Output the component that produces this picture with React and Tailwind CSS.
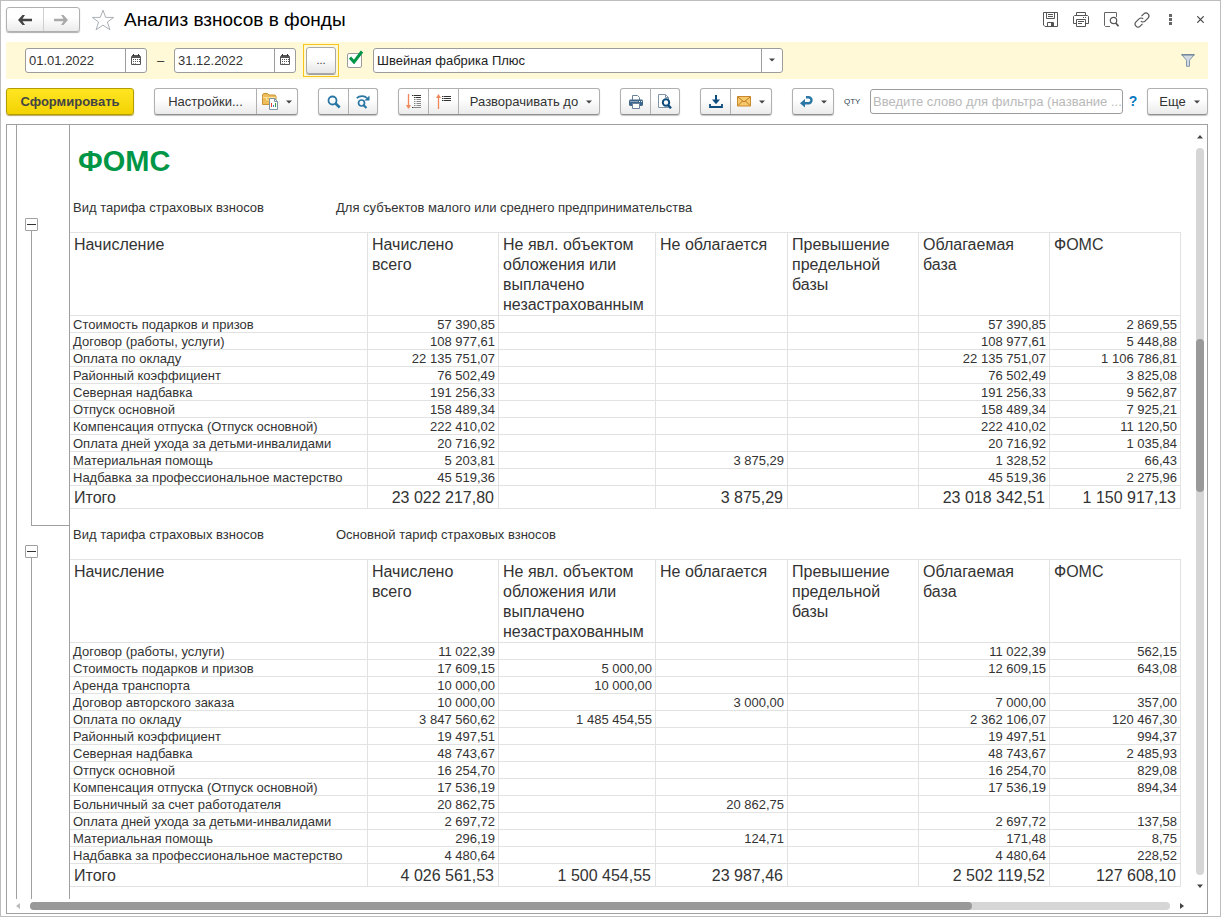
import { useState } from 'react'

const columns = [
  'Начисление',
  'Начислено всего',
  'Не явл. объектом обложения или выплачено незастрахованным',
  'Не облагается',
  'Превышение предельной базы',
  'Облагаемая база',
  'ФОМС',
]

const sections = [
  {
    tariff: 'Для субъектов малого или среднего предпринимательства',
    rows: [
      ['Стоимость подарков и призов', '57 390,85', '', '', '', '57 390,85', '2 869,55'],
      ['Договор (работы, услуги)', '108 977,61', '', '', '', '108 977,61', '5 448,88'],
      ['Оплата по окладу', '22 135 751,07', '', '', '', '22 135 751,07', '1 106 786,81'],
      ['Районный коэффициент', '76 502,49', '', '', '', '76 502,49', '3 825,08'],
      ['Северная надбавка', '191 256,33', '', '', '', '191 256,33', '9 562,87'],
      ['Отпуск основной', '158 489,34', '', '', '', '158 489,34', '7 925,21'],
      ['Компенсация отпуска (Отпуск основной)', '222 410,02', '', '', '', '222 410,02', '11 120,50'],
      ['Оплата дней ухода за детьми-инвалидами', '20 716,92', '', '', '', '20 716,92', '1 035,84'],
      ['Материальная помощь', '5 203,81', '', '3 875,29', '', '1 328,52', '66,43'],
      ['Надбавка за профессиональное мастерство', '45 519,36', '', '', '', '45 519,36', '2 275,96'],
    ],
    total: ['Итого', '23 022 217,80', '', '3 875,29', '', '23 018 342,51', '1 150 917,13'],
  },
  {
    tariff: 'Основной тариф страховых взносов',
    rows: [
      ['Договор (работы, услуги)', '11 022,39', '', '', '', '11 022,39', '562,15'],
      ['Стоимость подарков и призов', '17 609,15', '5 000,00', '', '', '12 609,15', '643,08'],
      ['Аренда транспорта', '10 000,00', '10 000,00', '', '', '', ''],
      ['Договор авторского заказа', '10 000,00', '', '3 000,00', '', '7 000,00', '357,00'],
      ['Оплата по окладу', '3 847 560,62', '1 485 454,55', '', '', '2 362 106,07', '120 467,30'],
      ['Районный коэффициент', '19 497,51', '', '', '', '19 497,51', '994,37'],
      ['Северная надбавка', '48 743,67', '', '', '', '48 743,67', '2 485,93'],
      ['Отпуск основной', '16 254,70', '', '', '', '16 254,70', '829,08'],
      ['Компенсация отпуска (Отпуск основной)', '17 536,19', '', '', '', '17 536,19', '894,34'],
      ['Больничный за счет работодателя', '20 862,75', '', '20 862,75', '', '', ''],
      ['Оплата дней ухода за детьми-инвалидами', '2 697,72', '', '', '', '2 697,72', '137,58'],
      ['Материальная помощь', '296,19', '', '124,71', '', '171,48', '8,75'],
      ['Надбавка за профессиональное мастерство', '4 480,64', '', '', '', '4 480,64', '228,52'],
    ],
    total: ['Итого', '4 026 561,53', '1 500 454,55', '23 987,46', '', '2 502 119,52', '127 608,10'],
  },
]

function Icon({ w = 16, h = 16, children }) {
  return (
    <svg width={w} height={h} viewBox={`0 0 ${w} ${h}`} fill="none" className="shrink-0" aria-hidden="true">
      {children}
    </svg>
  )
}

function Caret() {
  return (
    <Icon w={6} h={4}>
      <path d="M0 .5h6L3 3.500z" fill="#444" />
    </Icon>
  )
}

function ArrowIcon({ color, flip }) {
  return (
    <Icon w={14} h={12}>
      <path
        d={flip ? 'M0 4.800h9.500L7 1h2.500L14 6 9.500 11H7l2.500-3.800H0z' : 'M14 4.800H4.500L7 1H4.500L0 6l4.500 5H7L4.500 7.200H14z'}
        fill={color}
      />
    </Icon>
  )
}

function StarIcon() {
  return (
    <Icon w={24} h={22}>
      <path
        d="M12 1.200l2.700 7.200h8L16.400 13l2.500 7.800L12 16.100l-6.900 4.700L7.600 13 1.300 8.400h8z"
        stroke="#a9b0b6"
        fill="#fff"
      />
    </Icon>
  )
}

function CalendarIcon() {
  return (
    <Icon w={10} h={11}>
      <path d="M.5 2.500h9v8h-9z" fill="#fff" stroke="#555" />
      <path d="M1 1h8v3H1z" fill="#555" />
      <path d="M2 0h1v2H2zM7 0h1v2H7z" fill="#333" />
      <path d="M2 5.500h7M2 7.500h7" stroke="#555" strokeDasharray="1 1" />
      <path d="M2 9.500h3" stroke="#999" strokeDasharray="1 1" />
    </Icon>
  )
}

function SearchIcon() {
  return (
    <Icon w={14} h={14}>
      <circle cx="5.500" cy="5.500" r="4" stroke="#2a76a5" strokeWidth="1.800" />
      <path d="M8.300 8.300l4.400 4.200" stroke="#2a76a5" strokeWidth="2.600" />
    </Icon>
  )
}

function SearchNextIcon() {
  return (
    <Icon w={14} h={14}>
      <path d="M.8 3.200C3.500.6 8.500.4 11 3" stroke="#2a76a5" strokeWidth="1.800" />
      <path d="M13.500.5v5H8.300z" fill="#2a76a5" />
      <circle cx="5.500" cy="8" r="3" stroke="#2a76a5" strokeWidth="1.700" />
      <path d="M7.500 10l3 3" stroke="#2a76a5" strokeWidth="2.200" />
    </Icon>
  )
}

function VariantsIcon() {
  return (
    <Icon w={16} h={17}>
      <path d="M.5 3.500V2l1-1.500h4L7 2h6l1 1.500v8H.5z" fill="#edbd59" stroke="#c8943a" />
      <path d="M1 4.500h12.500M4.500 4v3h3" stroke="#fbe3a2" />
      <path d="M7.500 5.500h5l3 3v8h-8z" fill="#fff" stroke="#7c93a8" />
      <path d="M12.500 5.500v3h3" stroke="#7c93a8" />
      <path d="M9.500 10v4" stroke="#e0443a" />
      <path d="M11.500 12v2" stroke="#3d79c9" />
      <path d="M13.500 10v4" stroke="#35a047" />
    </Icon>
  )
}

function ExpandIcon() {
  return (
    <Icon w={16} h={16}>
      <path d="M2.500 0v14" stroke="#f0875a" strokeWidth="1.300" />
      <path d="M0 11h5l-2.500 4z" fill="#f0875a" />
      <path d="M6 1.500h1.500M8 1.500h7M8 3.500h1.500M10 3.500h5M6 13.500h1.500" stroke="#333" />
      <path d="M8 5.500h1.500M10.500 5.500H15M8 7.500h1.500M10.500 7.500H15M8 9.500h1.500M10.500 9.500H15M8 11.500h1.500M10.500 11.500H15M8 13.500h7" stroke="#888" />
    </Icon>
  )
}

function CollapseIcon() {
  return (
    <Icon w={16} h={16}>
      <path d="M2.500 2v13" stroke="#f0875a" strokeWidth="1.300" />
      <path d="M0 4h5L2.500 0z" fill="#f0875a" />
      <path d="M6 2.500h1.500M8 2.500h7M6 4.500h1.500M8 4.500h7M6 6.500h1.500M8 6.500h7" stroke="#333" />
    </Icon>
  )
}

function PrintIcon() {
  return (
    <Icon w={14} h={14}>
      <path d="M3.500 5V.5h5l2 2V5" fill="#fff" stroke="#6a8299" />
      <path d="M1 4.500h12l1 1V10l-1 1H1l-1-1V5.500z" fill="#3f668b" />
      <path d="M1 6.500h8" stroke="#8ba3ba" />
      <path d="M10 6.500h1M12 6.500h1" stroke="#fff" />
      <path d="M3.500 8.500h7v5h-7z" fill="#fff" stroke="#6a8299" />
    </Icon>
  )
}

function PreviewIcon() {
  return (
    <Icon w={14} h={15}>
      <path d="M.5.5h7l3 3v10H.5z" fill="#fff" stroke="#8195a8" />
      <path d="M7.500.5v3h3" stroke="#8195a8" />
      <circle cx="8" cy="8.500" r="3.200" fill="#fff" stroke="#0d4d7d" strokeWidth="2" />
      <path d="M10 11l3 3.300" stroke="#0d4d7d" strokeWidth="2.400" />
    </Icon>
  )
}

function DownloadIcon() {
  return (
    <Icon w={14} h={13}>
      <path d="M7 0v6" stroke="#0d4d7d" strokeWidth="2" />
      <path d="M3 4.500h8L7 9.200z" fill="#0d4d7d" />
      <path d="M1 9v3h12V9" stroke="#0d4d7d" strokeWidth="1.800" />
    </Icon>
  )
}

function MailIcon() {
  return (
    <Icon w={14} h={11}>
      <path d="M.5.5h13v9.500H.5z" fill="#f8c96b" stroke="#c8872b" />
      <path d="M1 1l6 5 6-5M1 9.500L5.500 5M13 9.500L8.500 5" stroke="#b9781f" />
    </Icon>
  )
}

function ReturnIcon() {
  return (
    <Icon w={13} h={12}>
      <path d="M6 1.300h2.500a2.900 2.900 0 010 6H4" stroke="#2a76a5" strokeWidth="2.400" />
      <path d="M0 7.300L5 3v8.600z" fill="#2a76a5" />
    </Icon>
  )
}

function FunnelIcon() {
  return (
    <Icon w={14} h={13}>
      <path d="M.7.500h12.600L8.500 6.300v6h-3v-6z" fill="#d3dae1" stroke="#8497a8" />
      <path d="M.5 1h13" stroke="#667c90" />
    </Icon>
  )
}

function SaveIcon() {
  return (
    <Icon w={15} h={15}>
      <path d="M.5.5h14v14H2l-1.500-1.500z" stroke="#555" />
      <path d="M3.500.5v6h8v-6M5 2.500h5M5 4.500h5M4.500 14v-3.500h6V14" stroke="#555" />
      <path d="M8 11h2v3H8z" fill="#555" />
    </Icon>
  )
}

function PrinterIcon() {
  return (
    <Icon w={16} h={15}>
      <path d="M3.500 3.500v-3h9v3M3.500 11.500h-3V4.500l1-1h13l1 1v7h-3" stroke="#555" />
      <path d="M3.500 7.500h9v7h-9zM5 9.500h6M5 11.500h4M10 5.500h1M12 5.500h1" stroke="#555" />
    </Icon>
  )
}

function FindIcon() {
  return (
    <Icon w={15} h={15}>
      <path d="M6 14.500H1.500l-1-1V.5h12V5" stroke="#666" />
      <circle cx="9.500" cy="8.500" r="3.200" stroke="#555" strokeWidth="1.200" />
      <path d="M11.800 11l2.700 3.300" stroke="#555" strokeWidth="1.800" />
    </Icon>
  )
}

function LinkIcon() {
  return (
    <Icon w={16} h={16}>
      <path
        d="M7.500 4.200L9.800 1.900a2.900 2.900 0 014.200 4.200l-3 3a2.900 2.900 0 01-4.200 0M8.500 11.800l-2.300 2.300A2.900 2.900 0 012 9.900l3-3a2.900 2.900 0 014.200 0"
        stroke="#555"
        strokeWidth="1.200"
      />
    </Icon>
  )
}

function DotsIcon() {
  return (
    <Icon w={3} h={11}>
      <path d="M0 0h3v3H0zM0 4h3v3H0zM0 8h3v3H0z" fill="#666" />
    </Icon>
  )
}

function CloseIcon() {
  return (
    <Icon w={7} h={7}>
      <path d="M.3.3l6.400 6.400M6.700.3L.3 6.700" stroke="#444" strokeWidth="1.200" />
    </Icon>
  )
}

function ButtonGroup({ children }) {
  return (
    <div className="flex h-[27px] shrink-0 divide-x divide-[#b0b0b0] rounded-[3px] border border-[#b0b0b0] border-b-[#8f8f8f] bg-linear-to-b from-white from-40% to-[#ebebeb] shadow-[0_1px_1px_#c4c4c4]">
      {children}
    </div>
  )
}

function IconButton({ label, caret, children }) {
  return (
    <button
      type="button"
      aria-label={label}
      className={caret ? 'flex w-10 items-center justify-center gap-2' : 'flex w-[30px] items-center justify-center last:w-7'}
    >
      {children}
      {caret && <Caret />}
    </button>
  )
}

function DateField({ label, value }) {
  const [date, setDate] = useState(value)

  return (
    <div className="flex h-[25px] w-[122px] rounded-[3px] border border-[#9c9c9c] bg-white">
      <input
        type="text"
        aria-label={label}
        value={date}
        onChange={(e) => setDate(e.target.value)}
        className="w-0 flex-1 px-[3px] text-[13px] outline-none"
      />
      <button
        type="button"
        aria-label="Выбрать дату"
        className="flex w-[21px] items-center justify-center border-l border-[#9c9c9c] pb-[2px]"
      >
        <CalendarIcon />
      </button>
    </div>
  )
}

function TitleBar() {
  return (
    <header className="flex h-[41px] items-center pr-4 pb-1 pl-[5px]">
      <div className="flex h-[25px] w-[74px] divide-x divide-[#cfcfcf] rounded-[3px] border border-[#b0b0b0] bg-linear-to-b from-white from-40% to-[#ebebeb] shadow-[0_1px_1px_#b0b0b0]">
        <button type="button" aria-label="Назад" className="flex flex-1 items-center justify-center">
          <ArrowIcon color="#444" />
        </button>
        <button type="button" aria-label="Вперед" className="flex flex-1 items-center justify-center">
          <ArrowIcon color="#aaa" flip />
        </button>
      </div>
      <button type="button" aria-label="В избранное" className="ml-[11px]">
        <StarIcon />
      </button>
      <h1 className="ml-[9px] flex-1 pt-[2px] text-[19px] text-black">Анализ взносов в фонды</h1>
      <div className="flex items-center gap-[15px]">
        <button type="button" aria-label="Сохранить"><SaveIcon /></button>
        <button type="button" aria-label="Печать"><PrinterIcon /></button>
        <button type="button" aria-label="Просмотр"><FindIcon /></button>
        <button type="button" aria-label="Ссылка"><LinkIcon /></button>
        <button type="button" aria-label="Меню" className="ml-1"><DotsIcon /></button>
        <button type="button" aria-label="Закрыть" className="ml-[10px]"><CloseIcon /></button>
      </div>
    </header>
  )
}

function FilterBar() {
  const [enabled, setEnabled] = useState(true)

  return (
    <div className="mr-3 ml-[5px] flex h-[37px] items-center bg-[#fff9d8] pr-[13px] pl-[19px]">
      <DateField label="Начало периода" value="01.01.2022" />
      <span className="w-[27px] text-center">–</span>
      <DateField label="Конец периода" value="31.12.2022" />
      <div className="ml-[7px] border border-[#f5c51c] p-[2px]">
        <button
          type="button"
          aria-label="Выбрать период"
          className="block h-[27px] w-[30px] rounded-[3px] border border-[#a8a8a8] bg-linear-to-b from-white from-40% to-[#e6e6e6] text-[11px] shadow-[0_1px_0_#a0a0a0]"
        >
          ...
        </button>
      </div>
      <span className="relative ml-2 h-[15px] w-[15px]">
        <input
          type="checkbox"
          aria-label="Отбор по организации"
          checked={enabled}
          onChange={(e) => setEnabled(e.target.checked)}
          className="block h-[15px] w-[15px] appearance-none rounded-[2px] border border-[#9c9c9c] bg-white"
        />
        {enabled && (
          <span className="pointer-events-none absolute -top-[3px] left-[2px]">
            <Icon w={15} h={14}>
              <path d="M1 7.500l4 4.500L13 1.500" stroke="#009646" strokeWidth="3" />
            </Icon>
          </span>
        )}
      </span>
      <div className="relative ml-[11px] h-[25px] w-[410px]">
        <select
          aria-label="Организация"
          className="block h-full w-full appearance-none rounded-[3px] border border-[#9c9c9c] bg-white px-[3px] text-[13px] text-[#222]"
        >
          <option>Швейная фабрика Плюс</option>
        </select>
        <span className="pointer-events-none absolute inset-y-px right-px flex w-[21px] items-center justify-center border-l border-[#9c9c9c] pb-[2px]">
          <Caret />
        </span>
      </div>
      <button type="button" aria-label="Фильтр" className="ml-auto">
        <FunnelIcon />
      </button>
    </div>
  )
}

function Toolbar() {
  return (
    <div className="mr-3 ml-[5px] flex h-[45px] items-center gap-5">
      <button
        type="button"
        className="h-[27px] w-32 shrink-0 rounded-[3px] border border-[#b39c00] bg-linear-to-b from-[#ffe620] to-[#f3d200] text-[13px] font-bold text-[#444] shadow-[0_1px_1px_#b8a860]"
      >
        Сформировать
      </button>
      <ButtonGroup>
        <button type="button" className="w-[102px] text-[13px]">Настройки...</button>
        <IconButton label="Варианты отчета" caret><VariantsIcon /></IconButton>
      </ButtonGroup>
      <ButtonGroup>
        <IconButton label="Найти"><SearchIcon /></IconButton>
        <IconButton label="Найти далее"><SearchNextIcon /></IconButton>
      </ButtonGroup>
      <ButtonGroup>
        <IconButton label="Развернуть"><ExpandIcon /></IconButton>
        <IconButton label="Свернуть"><CollapseIcon /></IconButton>
        <button type="button" className="flex w-[140px] items-center justify-center gap-2 pl-1 text-[13px]">
          Разворачивать до <Caret />
        </button>
      </ButtonGroup>
      <ButtonGroup>
        <IconButton label="Печать"><PrintIcon /></IconButton>
        <IconButton label="Предварительный просмотр"><PreviewIcon /></IconButton>
      </ButtonGroup>
      <ButtonGroup>
        <IconButton label="Сохранить как"><DownloadIcon /></IconButton>
        <IconButton label="Отправить" caret><MailIcon /></IconButton>
      </ButtonGroup>
      <ButtonGroup>
        <IconButton label="Вернуться" caret><ReturnIcon /></IconButton>
      </ButtonGroup>
      <div className="-ml-[10px] flex min-w-0 flex-1 items-center">
        <span className="w-[26px] text-[8px] text-[#2b4050]">QTY</span>
        <input
          type="text"
          aria-label="Фильтр по строке"
          placeholder="Введите слово для фильтра (название ..."
          className="h-[25px] w-0 flex-1 rounded-[3px] border border-[#9c9c9c] pl-[2px] text-[13px] outline-none placeholder:text-[#b9b9b9]"
        />
        <button type="button" aria-label="Справка" className="w-6 pr-1 text-[14px] font-bold text-[#0a78c2]">?</button>
        <ButtonGroup>
          <button type="button" className="flex w-[59px] items-center justify-center gap-2 pl-1 text-[13px]">
            Еще <Caret />
          </button>
        </ButtonGroup>
      </div>
    </div>
  )
}

function ReportTable({ rows, total }) {
  return (
    <table className="w-full table-fixed border-separate border-spacing-0 border-t border-[#e2e2e2]">
      <colgroup>
        <col />
        <col className="w-[131px]" />
        <col className="w-[157px]" />
        <col className="w-[132px]" />
        <col className="w-[131px]" />
        <col className="w-[131px]" />
        <col className="w-[131px]" />
      </colgroup>
      <thead>
        <tr className="h-[83px]">
          {columns.map((name) => (
            <th
              key={name}
              scope="col"
              className="border-r border-b border-[#e2e2e2] px-1 pt-[2px] text-left align-top text-[16px] leading-5 font-normal"
            >
              {name}
            </th>
          ))}
        </tr>
      </thead>
      <tbody>
        {rows.map((row) => (
          <tr key={row[0]} className="h-[17px]">
            {row.map((cell, i) => (
              <td
                key={i}
                className="border-r border-b border-[#e2e2e2] px-[3px] pt-px text-right text-[13px] leading-[15px] whitespace-nowrap first:text-left"
              >
                {cell}
              </td>
            ))}
          </tr>
        ))}
      </tbody>
      <tfoot>
        <tr className="h-[23px]">
          {total.map((cell, i) => (
            <td
              key={i}
              className="border-r border-b border-[#e2e2e2] px-1 pt-[2px] text-right text-[16px] leading-5 whitespace-nowrap first:text-left"
            >
              {cell}
            </td>
          ))}
        </tr>
      </tfoot>
    </table>
  )
}

function ReportSection({ section, last }) {
  return (
    <section className={last ? 'flex flex-1' : 'flex'}>
      <div className="flex w-[53px] shrink-0 flex-col border-l border-[#a0a0a0] pt-[19px] pl-2">
        <button
          type="button"
          aria-label="Свернуть группу"
          className="flex h-[13px] w-[13px] items-center justify-center rounded-[1px] border border-[#a0a0a0]"
        >
          <span className="h-px w-[9px] bg-[#333]" />
        </button>
        <div className={last ? 'ml-[6px] flex-1 border-l border-[#a0a0a0]' : 'ml-[6px] flex-1 border-b border-l border-[#a0a0a0]'} />
      </div>
      <div className={last ? 'min-w-0 flex-1 border-l border-[#a0a0a0] pb-3' : 'min-w-0 flex-1 border-l border-[#a0a0a0] pb-[17px]'}>
        <div className="flex h-[33px] pl-[3px] text-[13px] leading-[18px]">
          <span className="w-[263px]">Вид тарифа страховых взносов</span>
          <span>{section.tariff}</span>
        </div>
        <ReportTable rows={section.rows} total={section.total} />
      </div>
    </section>
  )
}

function Report() {
  return (
    <main className="mr-3 mb-[2px] ml-[5px] flex flex-1 flex-col border border-[#a0a0a0]">
      <div className="flex flex-1">
        <div className="ml-[9px] flex min-w-0 flex-1 flex-col">
          <div className="flex h-[74px]">
            <div className="w-[53px] shrink-0 border-l border-[#a0a0a0]" />
            <h2 className="flex-1 border-l border-[#a0a0a0] pt-[18px] pl-2 text-[29px] leading-9 font-bold text-[#009646]">
              ФОМС
            </h2>
          </div>
          {sections.map((section, i) => (
            <ReportSection key={section.tariff} section={section} last={i === sections.length - 1} />
          ))}
        </div>
        <div className="flex w-[26px] shrink-0 flex-col items-center gap-[9px] pt-[9px] pr-[3px] pb-[10px] pl-[15px]">
          <Icon w={6} h={5}>
            <path d="M0 4.500h6L3 1z" fill="#444" />
          </Icon>
          <div className="flex w-2 flex-1 flex-col rounded-full bg-[#d6d6d6]">
            <div className="flex-[191]" />
            <div className="flex-[153] rounded-full bg-[#999]" />
            <div className="flex-[384]" />
          </div>
          <Icon w={6} h={5}>
            <path d="M0 .5h6L3 4z" fill="#444" />
          </Icon>
        </div>
      </div>
      <div className="flex h-[14px] items-center gap-[10px] pr-[23px] pl-[9px]">
        <Icon w={4} h={6}>
          <path d="M4 0v6L0 3z" fill="#bbb" />
        </Icon>
        <div className="flex h-2 flex-1 rounded-full bg-[#d6d6d6]">
          <div className="flex-[942] rounded-full bg-[#999]" />
          <div className="flex-[198]" />
        </div>
        <Icon w={4} h={6}>
          <path d="M0 0v6l4-3z" fill="#444" />
        </Icon>
      </div>
    </main>
  )
}

export default function App() {
  return (
    <div className="flex min-h-screen flex-col border border-[#bdbdbd] bg-white font-['Liberation_Sans',Arial,sans-serif] text-[13px] text-[#333]">
      <TitleBar />
      <FilterBar />
      <Toolbar />
      <Report />
    </div>
  )
}
